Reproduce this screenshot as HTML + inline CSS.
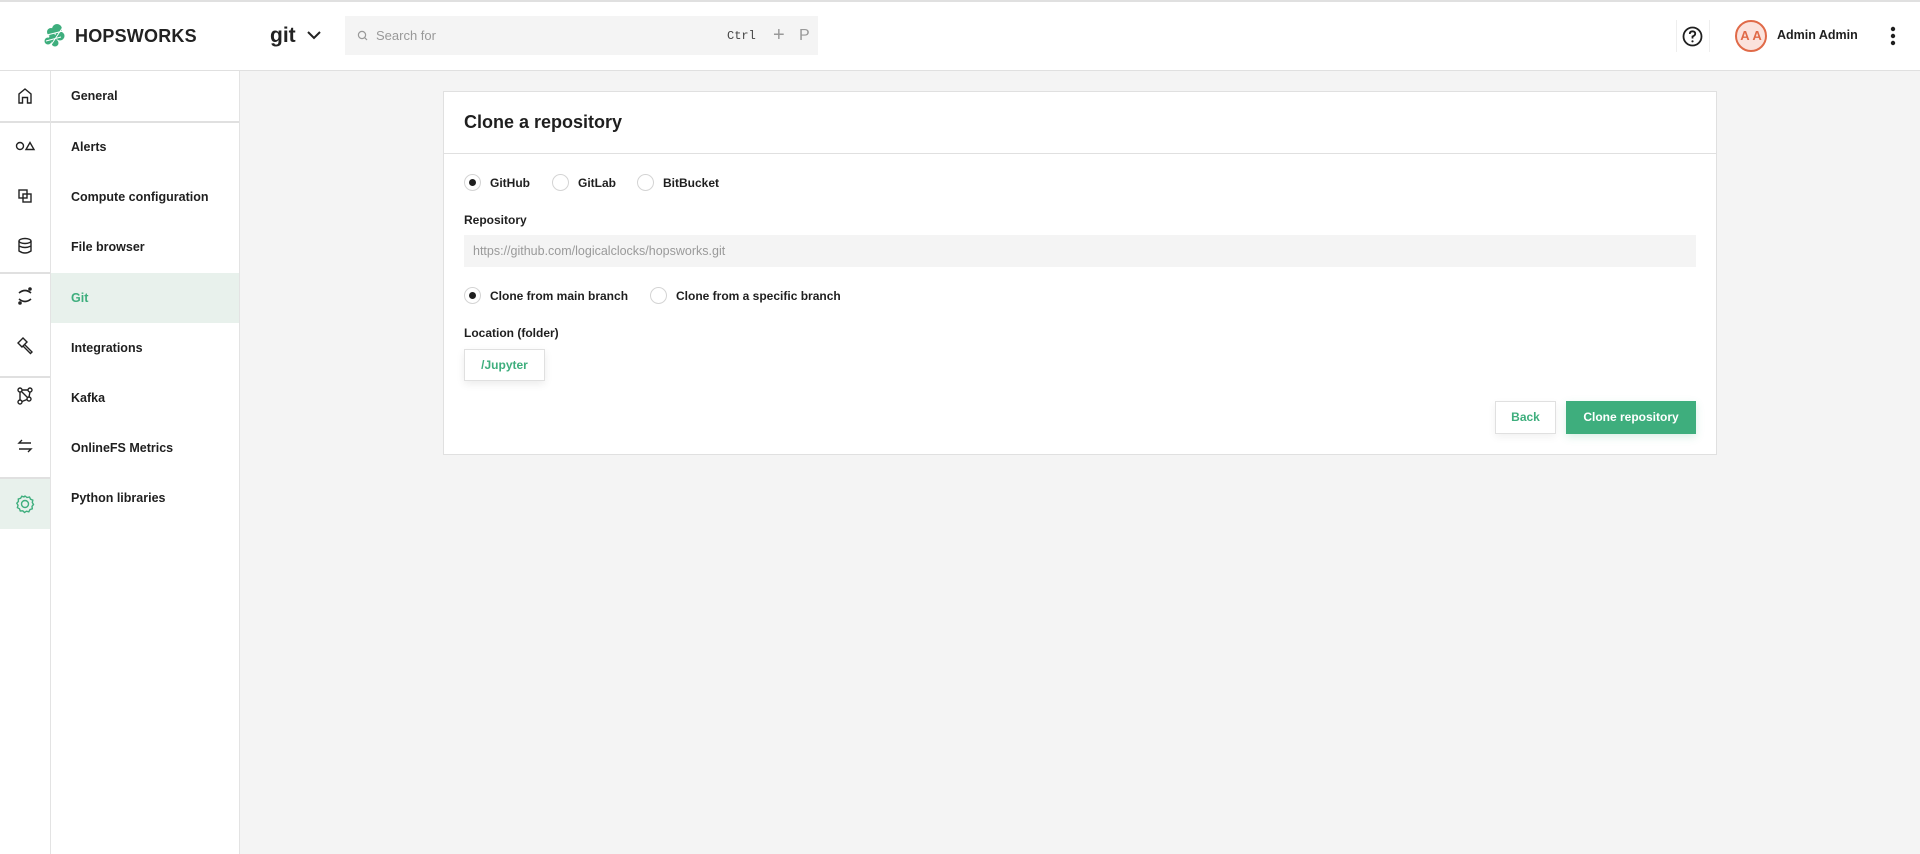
<!DOCTYPE html>
<html><head><meta charset="utf-8"><style>
*{box-sizing:border-box;margin:0;padding:0}
body{width:1920px;height:854px;background:#f4f4f4;font-family:"Liberation Sans",sans-serif;color:#1f1f1f;position:relative;overflow:hidden}
.abs{position:absolute}
.hdr{left:0;top:0;width:1920px;height:71px;background:#fff;border-top:2px solid #e0e0e0;border-bottom:1px solid #e0e0e0}
.b{font-weight:bold}
.side1{left:0;top:71px;width:51px;height:783px;background:#fff;border-right:1px solid #e3e3e3}
.side2{left:51px;top:71px;width:189px;height:783px;background:#fff;border-right:1px solid #e3e3e3}
.item{position:absolute;left:0;width:188px;height:50px;line-height:50px;padding-left:20px;font-size:12.5px;font-weight:bold}
.hl{position:absolute;height:1.5px;background:#e0e0e0}
.ic{position:absolute;left:13px;width:24px;height:24px}
.card{left:443px;top:91px;width:1274px;height:364px;background:#fff;border:1px solid #e0e0e0}
.radio{position:absolute;width:17px;height:17px;border:1px solid #d4d4d4;border-radius:50%;background:#fff}
.radio.on::after{content:"";position:absolute;left:4px;top:4px;width:7px;height:7px;border-radius:50%;background:#1f1f1f}
.lbl{position:absolute;font-size:12px;font-weight:bold}
</style></head><body>
<div class="abs hdr"></div>
<svg class="abs" style="left:43px;top:23px" width="24" height="24" viewBox="0 0 24 24"><g fill="#3eae7d"><circle cx="14" cy="6" r="5"/><circle cx="8" cy="9" r="4"/><circle cx="17" cy="13" r="4.5"/><circle cx="10" cy="15" r="4"/><circle cx="5" cy="18" r="3.5"/><circle cx="12" cy="20" r="3.5"/></g><g stroke="#fff" stroke-width="1" fill="none"><path d="M4 12 L20 8 M3 18 L18 14 M8 22 L20 4"/></g></svg>
<div class="abs b" style="left:75px;top:26px;font-size:18px;letter-spacing:0.2px;color:#222">HOPSWORKS</div>
<div class="abs" style="left:270px;top:24px;font-size:21px;font-weight:600;color:#222">git</div>
<svg class="abs" style="left:306px;top:29px" width="16" height="12" viewBox="0 0 16 12"><path d="M2 3 L8 9 L14 3" stroke="#222" stroke-width="2" fill="none"/></svg>
<div class="abs" style="left:345px;top:16px;width:473px;height:39px;background:#f4f4f4"></div>
<svg class="abs" style="left:357px;top:30px" width="11" height="11" viewBox="0 0 11 11"><circle cx="5" cy="5" r="3.6" stroke="#999" stroke-width="1.2" fill="none"/><path d="M7.6 7.6 L10 10" stroke="#999" stroke-width="1.2"/></svg>
<div class="abs" style="left:376px;top:28px;font-size:13px;color:#999">Search for</div>
<div class="abs" style="left:727px;top:29px;font-size:12px;font-family:'Liberation Mono',monospace;color:#444">Ctrl</div>
<div class="abs" style="left:773px;top:24px;font-size:20px;color:#999">+</div>
<div class="abs" style="left:799px;top:27px;font-size:16px;color:#999">P</div>
<div class="abs" style="left:1676px;top:20px;width:1px;height:32px;background:#eee"></div>
<div class="abs" style="left:1709px;top:20px;width:1px;height:32px;background:#eee"></div>
<svg class="abs" style="left:1682px;top:26px" width="21" height="21" viewBox="0 0 21 21"><circle cx="10.5" cy="10.5" r="9" stroke="#1f1f1f" stroke-width="1.8" fill="none"/><path d="M7.8 8 Q7.8 5.3 10.5 5.3 Q13.2 5.3 13.2 7.8 Q13.2 9.5 10.5 10.5 L10.5 12.5" stroke="#1f1f1f" stroke-width="1.8" fill="none"/><circle cx="10.5" cy="15.3" r="1.1" fill="#1f1f1f"/></svg>
<div class="abs" style="left:1735px;top:20px;width:32px;height:32px;border-radius:50%;border:2px solid #e06a48;background:#fbe2dc;color:#e06a48;font-size:13px;font-weight:bold;text-align:center;line-height:28px">A A</div>
<div class="abs b" style="left:1777px;top:28px;font-size:12.5px">Admin Admin</div>
<svg class="abs" style="left:1889px;top:26px" width="8" height="20"><circle cx="4" cy="3" r="2.2" fill="#1f1f1f"/><circle cx="4" cy="10" r="2.2" fill="#1f1f1f"/><circle cx="4" cy="17" r="2.2" fill="#1f1f1f"/></svg>

<div class="abs side1">
 <div class="hl" style="left:0;top:50px;width:50px"></div>
 <div class="hl" style="left:0;top:201px;width:50px"></div>
 <div class="hl" style="left:0;top:305px;width:50px"></div>
 <div class="hl" style="left:0;top:406px;width:50px"></div>
 <div style="position:absolute;left:0;top:408px;width:50px;height:50px;background:#e8f1ec"></div>
 <svg class="ic" style="top:13px" viewBox="0 0 24 24" fill="none" stroke="#222" stroke-width="1.4"><path d="M6 19 V10 L12 5 L18 10 V19 H14.5 V13.5 H9.5 V19 Z"/></svg>
 <svg class="ic" style="top:63px" viewBox="0 0 24 24" fill="none" stroke="#222" stroke-width="1.4"><circle cx="7" cy="12" r="3.5"/><path d="M13 15.5 L17 8.5 L21 15.5 Z"/></svg>
 <svg class="ic" style="top:113px" viewBox="0 0 24 24" fill="none" stroke="#222" stroke-width="1.4"><rect x="6" y="6" width="8" height="8"/><rect x="10" y="10" width="8" height="8"/></svg>
 <svg class="ic" style="top:163px" viewBox="0 0 24 24" fill="none" stroke="#222" stroke-width="1.4"><ellipse cx="12" cy="7" rx="6" ry="2.5"/><path d="M6 7 V17 Q12 21 18 17 V7 M6 12 Q12 15 18 12"/></svg>
 <svg class="ic" style="top:213px" viewBox="0 0 24 24" fill="none" stroke="#222" stroke-width="1.6"><path d="M6 9 Q12 4 18 9 M6 15 Q12 20 18 15"/><circle cx="17" cy="5" r="1" fill="#222"/><circle cx="7" cy="19" r="1" fill="#222"/></svg>
 <svg class="ic" style="top:263px" viewBox="0 0 24 24" fill="none" stroke="#222" stroke-width="1.4"><path d="M5 9 L10 4 L14 8 L9 13 Z M12 11 L19 18 L17.5 19.5 L10.5 12.5"/></svg>
 <svg class="ic" style="top:313px" viewBox="0 0 24 24" fill="none" stroke="#222" stroke-width="1.4"><circle cx="7" cy="6" r="2"/><circle cx="17" cy="6" r="2"/><circle cx="7" cy="18" r="2"/><circle cx="16" cy="15" r="2"/><path d="M8.5 7.5 L14.5 13.5 M9 6 H15 M7 8 V16 M17 8 L16 13 M9 17.5 L14 15.5"/></svg>
 <svg class="ic" style="top:363px" viewBox="0 0 24 24" fill="none" stroke="#222" stroke-width="1.4"><path d="M18 9 H6 L9 6 M6 15 H18 L15 18"/></svg>
 <svg class="ic" style="top:421px" viewBox="0 0 24 24" fill="none" stroke="#3eae7d" stroke-width="1.4"><circle cx="12" cy="12" r="3.5"/><path d="M12 4 L14 5.5 L16.5 5 L17.5 7.2 L19.8 8.2 L19.3 10.5 L20.5 12.5 L19 14.3 L19.3 16.8 L17 17.6 L15.8 19.8 L13.5 19.2 L11.5 20.5 L9.8 18.8 L7.3 19 L6.5 16.8 L4.4 15.6 L5 13.2 L3.8 11.2 L5.4 9.5 L5.3 7 L7.6 6.3 L8.8 4.2 L11 4.9 Z"/></svg>
</div>
<div class="abs side2">
 <div class="item" style="top:0">General</div>
 <div class="hl" style="left:0;top:50px;width:188px"></div>
 <div class="item" style="top:51px">Alerts</div>
 <div class="item" style="top:101px">Compute configuration</div>
 <div class="item" style="top:151px">File browser</div>
 <div class="item" style="top:202px;background:#e8f1ec;color:#3eae7d">Git</div>
 <div class="item" style="top:252px">Integrations</div>
 <div class="item" style="top:302px">Kafka</div>
 <div class="item" style="top:352px">OnlineFS Metrics</div>
 <div class="item" style="top:402px">Python libraries</div>
</div>

<div class="abs card">
 <div style="position:absolute;left:0;top:0;width:1272px;height:62px;border-bottom:1px solid #e0e0e0"></div>
 <div style="position:absolute;left:20px;top:20px;font-size:18px;font-weight:bold">Clone a repository</div>
 <div class="radio on" style="left:20px;top:82px"></div><div class="lbl" style="left:46px;top:84px">GitHub</div>
 <div class="radio" style="left:108px;top:82px"></div><div class="lbl" style="left:134px;top:84px">GitLab</div>
 <div class="radio" style="left:193px;top:82px"></div><div class="lbl" style="left:219px;top:84px">BitBucket</div>
 <div class="lbl" style="left:20px;top:121px">Repository</div>
 <div style="position:absolute;left:20px;top:143px;width:1232px;height:32px;background:#f4f4f4;padding-left:9px;line-height:32px;font-size:12.5px;color:#9a9a9a">https://github.com/logicalclocks/hopsworks.git</div>
 <div class="radio on" style="left:20px;top:195px"></div><div class="lbl" style="left:46px;top:197px">Clone from main branch</div>
 <div class="radio" style="left:206px;top:195px"></div><div class="lbl" style="left:232px;top:197px">Clone from a specific branch</div>
 <div class="lbl" style="left:20px;top:234px">Location (folder)</div>
 <div style="position:absolute;left:20px;top:257px;width:81px;height:32px;border:1px solid #e0e0e0;box-shadow:0 3px 8px rgba(0,0,0,.08);color:#3eae7d;font-size:12px;font-weight:bold;text-align:center;line-height:30px">/Jupyter</div>
 <div style="position:absolute;left:1051px;top:309px;width:61px;height:33px;border:1px solid #e0e0e0;box-shadow:0 3px 8px rgba(0,0,0,.06);color:#3eae7d;font-size:12px;font-weight:bold;text-align:center;line-height:31px">Back</div>
 <div style="position:absolute;left:1122px;top:309px;width:130px;height:33px;background:#3eae7d;color:#fff;font-size:12px;font-weight:bold;text-align:center;line-height:33px;box-shadow:0 3px 8px rgba(62,174,125,.2)">Clone repository</div>
</div>
</body></html>
